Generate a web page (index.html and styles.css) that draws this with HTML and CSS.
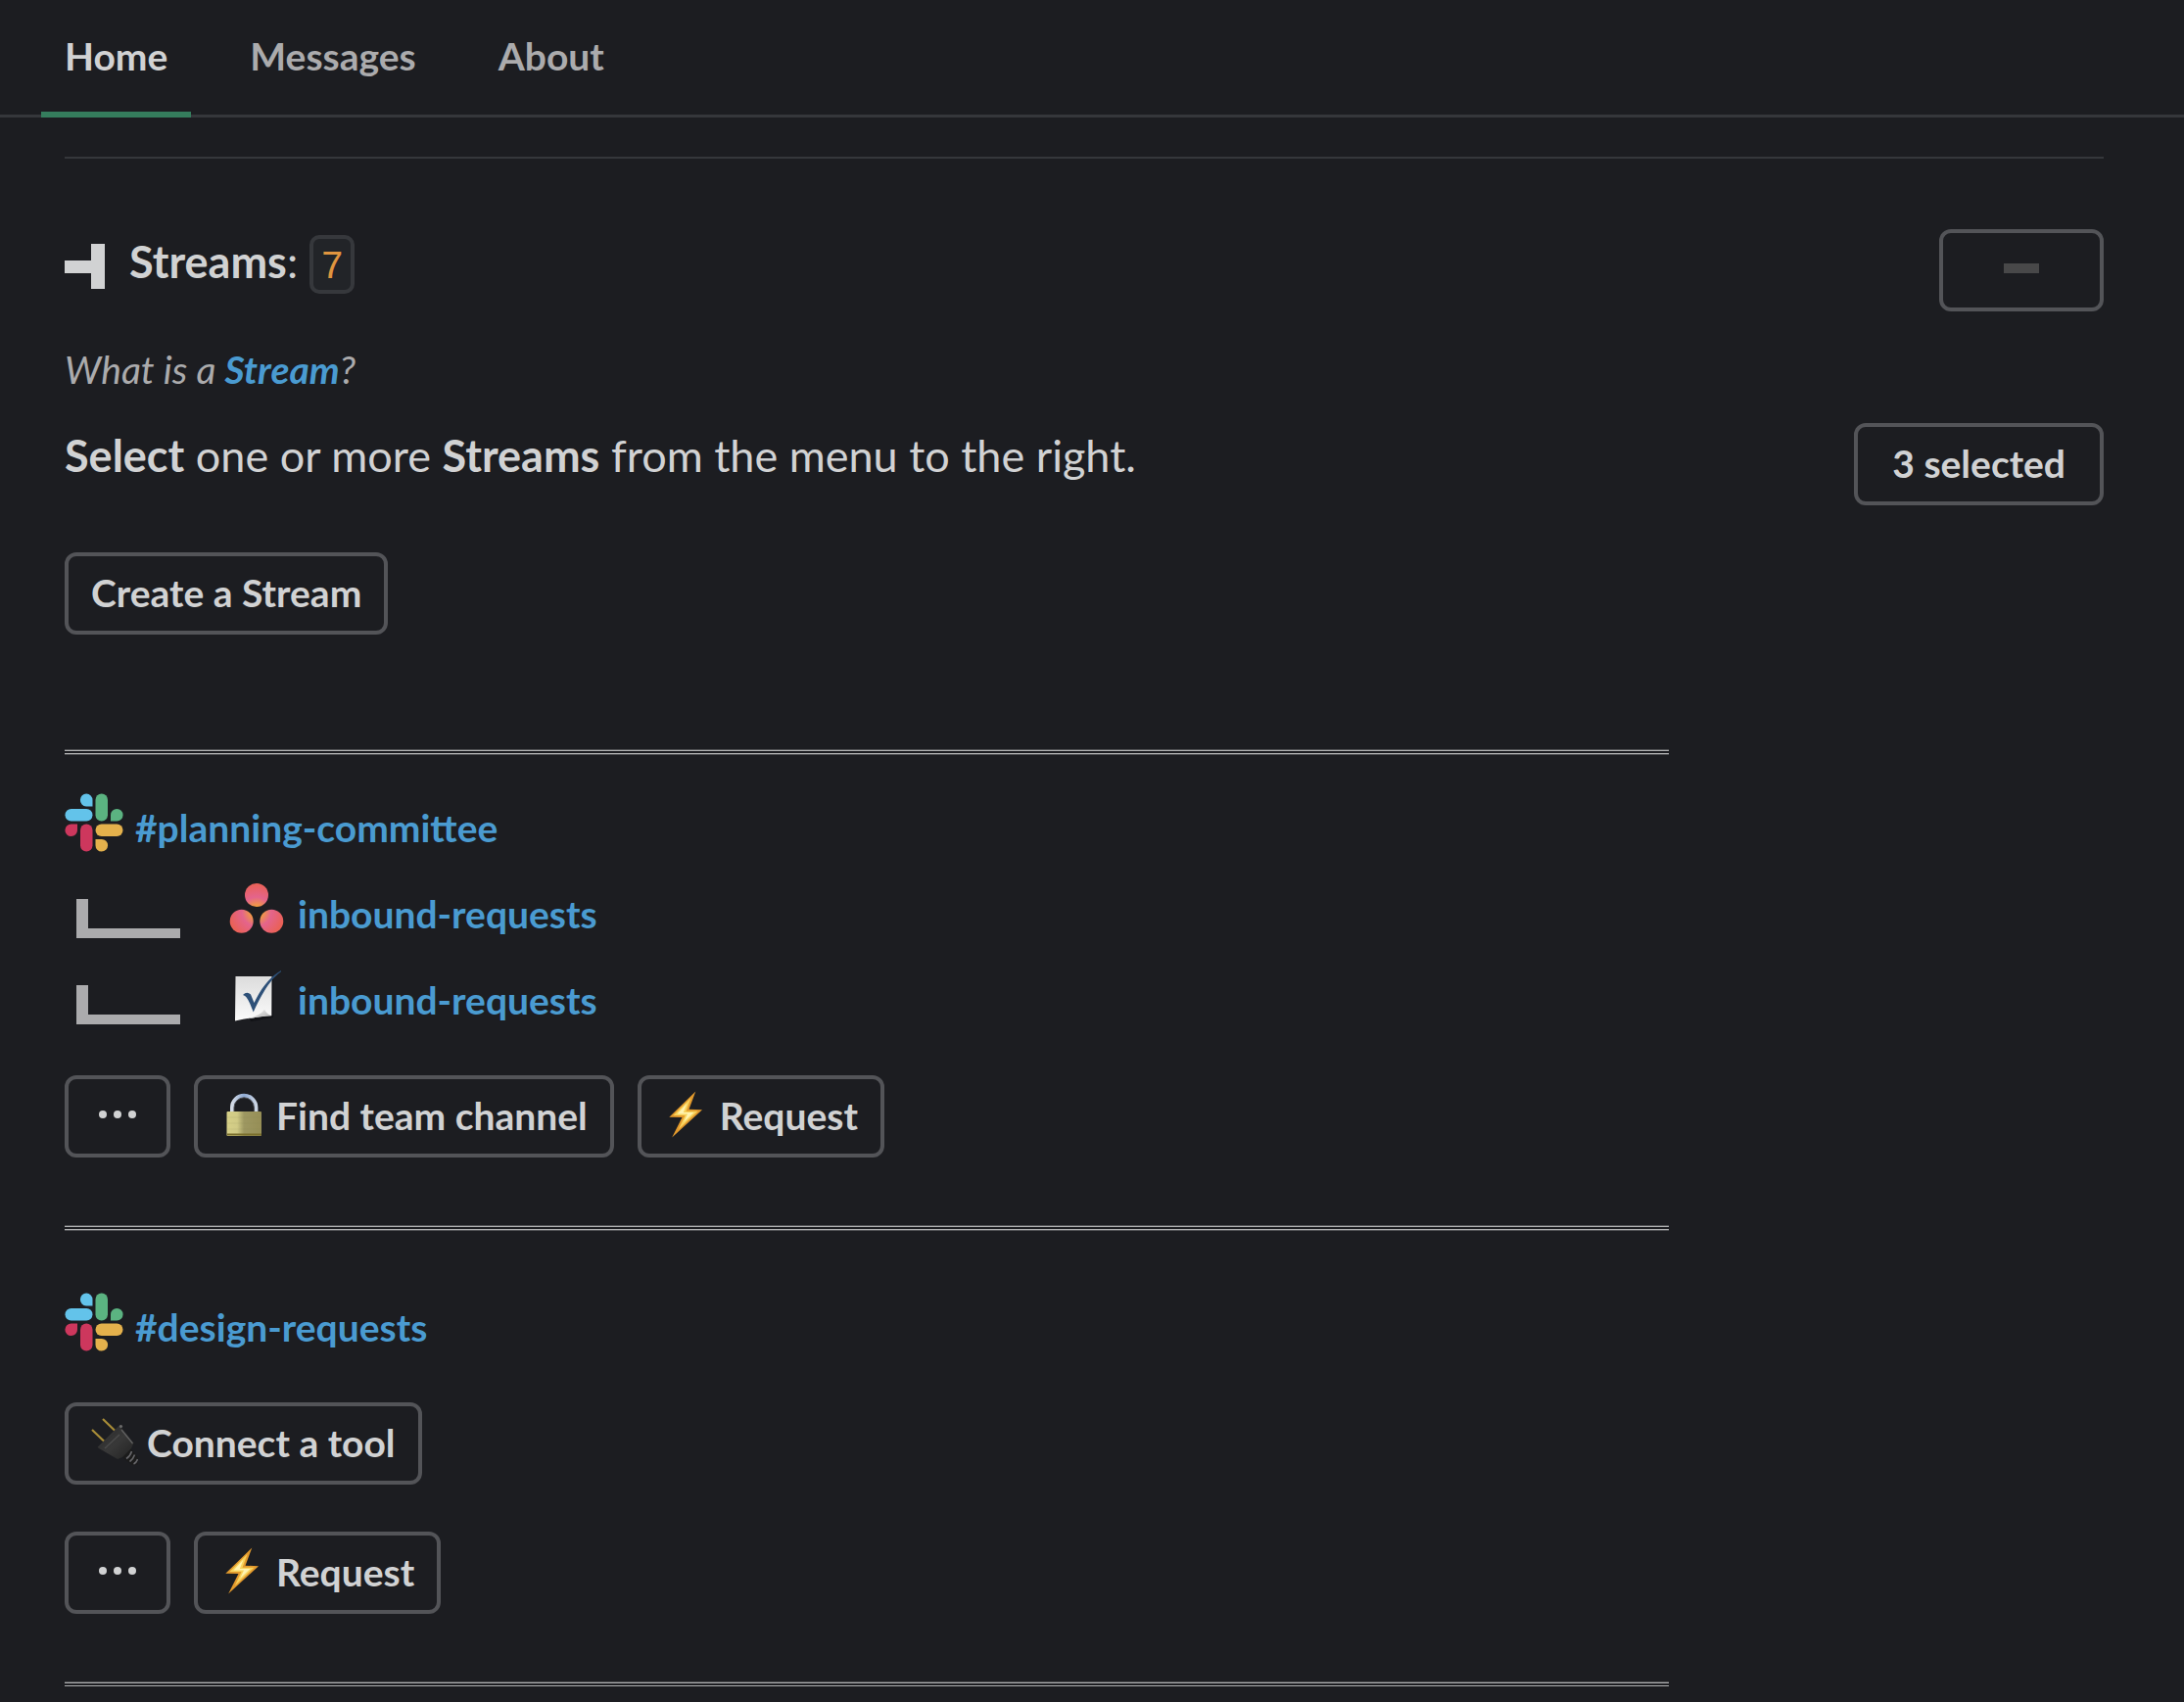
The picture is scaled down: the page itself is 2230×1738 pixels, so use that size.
FILE: index.html
```
<!DOCTYPE html>
<html lang="en">
<head>
    <meta charset="UTF-8">
    <title>Streams</title>
    <link rel="stylesheet" href="styles.css">
</head>
<body>
    <!-- shared icons -->
    <svg class="sprite" aria-hidden="true">
        <defs>
            <radialGradient id="asanaFill" gradientUnits="userSpaceOnUse" cx="30" cy="33" r="30">
                <stop offset="0.16" stop-color="#f2a03a"/>
                <stop offset="0.5" stop-color="#e4648c"/>
                <stop offset="0.95" stop-color="#ea6157"/>
            </radialGradient>
            <linearGradient id="paperFill" x1="0" y1="0" x2="0" y2="1">
                <stop offset="0" stop-color="#dcdcdc"/>
                <stop offset="1" stop-color="#fbfbfb"/>
            </linearGradient>
            <linearGradient id="curlFill" x1="0" y1="0" x2="1" y2="1">
                <stop offset="0.2" stop-color="#eeeeee"/>
                <stop offset="1" stop-color="#a8a8a8"/>
            </linearGradient>
            <linearGradient id="brassFill">
                <stop offset="0" stop-color="#d6d088"/>
                <stop offset="0.3" stop-color="#d0ca85"/>
                <stop offset="0.5" stop-color="#9d9761"/>
                <stop offset="1" stop-color="#968e56"/>
            </linearGradient>
            <linearGradient id="steelFill">
                <stop offset="0" stop-color="#d5dce6"/>
                <stop offset="0.5" stop-color="#8faad4"/>
                <stop offset="1" stop-color="#ccd6e4"/>
            </linearGradient>
            <linearGradient id="plugFill" x1="0" y1="0" x2="1" y2="1">
                <stop offset="0" stop-color="#2b2b2b"/>
                <stop offset="0.5" stop-color="#383838"/>
                <stop offset="1" stop-color="#222222"/>
            </linearGradient>
        </defs>
        <symbol id="slack" viewBox="0 0 60 60">
            <g fill="#63c3ea">
                <path d="M28.5 13.5H22A6.3 6.5 0 1 1 28.5 7Z"/>
                <rect x="0.5" y="16" width="28" height="12.5" rx="6.2"/>
            </g>
            <g fill="#5bb381">
                <rect x="31.5" y="0.5" width="12.5" height="28" rx="6.2"/>
                <path d="M47 28.5V22.2A6.3 6.3 0 1 1 53.2 28.5Z"/>
            </g>
            <g fill="#cd375d">
                <path d="M13 31.5V37.8A6.3 6.3 0 1 1 6.8 31.5Z"/>
                <rect x="16" y="31.5" width="12.5" height="28" rx="6.2"/>
            </g>
            <g fill="#e4b14c">
                <rect x="31.5" y="31.5" width="28" height="12.5" rx="6.2"/>
                <path d="M31.5 47H37.8A6.3 6.3 0 1 1 31.5 53.2Z"/>
            </g>
        </symbol>
        <symbol id="asana" viewBox="0 0 60 60">
            <g fill="url(#asanaFill)">
                <circle cx="30" cy="16" r="12"/>
                <circle cx="14.7" cy="42.7" r="12"/>
                <circle cx="45.3" cy="42.7" r="12"/>
            </g>
        </symbol>
        <symbol id="checklist" viewBox="0 0 60 60">
            <path d="M10 12H47V53L24 57Z" fill="#111216"/>
            <path d="M8.5 11H45.5L45.3 51.3Q30 52 8 56.5Z" fill="url(#paperFill)"/>
            <path d="M20 54.5Q34 51 38 44.7Q40 49 44.7 51Q31 52 20 54.5Z" fill="url(#curlFill)"/>
            <path d="M16 30Q20 26 24 29.5L27.5 38C34 24 44 11 55 5V6.2C45 13 36 27 26.7 47.5C24 41 21 31 16 30Z" fill="#2d5078"/>
        </symbol>
        <symbol id="branch" viewBox="0 0 118 52">
            <path d="M12 12H24V42H118V52H12Z" fill="#ababad"/>
        </symbol>
        <symbol id="dots" viewBox="0 0 54 48">
            <g fill="#d1d2d3">
                <circle cx="12" cy="24" r="4"/>
                <circle cx="27" cy="24" r="4"/>
                <circle cx="42" cy="24" r="4"/>
            </g>
        </symbol>
        <symbol id="lock" viewBox="0 0 48 48">
            <path d="M12 23V17A12.2 12.2 0 0 1 36.4 17V23" fill="none" stroke="url(#steelFill)" stroke-width="4"/>
            <path d="M14 23V17A10.2 10.2 0 0 1 34.4 17V23" fill="none" stroke="#4c4d50" stroke-width="1"/>
            <rect x="6.5" y="21" width="35.5" height="25" rx="1" fill="url(#brassFill)"/>
            <path d="M7 27H41.5M7 33H41.5M7 39H41.5" stroke="#8d8750" stroke-opacity="0.15"/>
            <path d="M7 44.5H42" stroke="#7a6f2c" stroke-width="2"/>
        </symbol>
        <symbol id="bolt" viewBox="0 0 48 48">
            <path d="M32.3 0.5L5.3 26.7L18.5 27L8.2 47.5L39 19.3L25.5 18.7Z" fill="#e39a2d"/>
            <path d="M27.5 7L9.5 25H21.5L15 39L34.5 20.7H22.5Z" fill="#f8d35c"/>
            <path d="M23.5 12.5L13.5 23.5H24L20 32L30.5 22H19.8Z" fill="#fff3b0"/>
        </symbol>
        <symbol id="plug" viewBox="0 0 48 48">
            <path d="M1 12L13.3 23.7M12 1L24.7 13.2" stroke="#a88d38" stroke-width="2.2"/>
            <path d="M31 39L40 31L47.5 40V47.5H41Z" fill="#1b1b1b"/>
            <path d="M36 41.5Q40 39 41.500 34M39.500 44.500Q43 42 44.500 37.500M43.500 47Q46.500 45.500 47.500 42" fill="none" stroke="#66666a" stroke-width="1.6"/>
            <path d="M8 31L30 9L43.5 25.5L41 31L32 40L27 42Z" fill="url(#plugFill)"/>
            <path d="M31 12L42.5 26" fill="none" stroke="#626262" stroke-width="1.2"/>
            <path d="M7.5 30.500L30.5 7.500" stroke="#343434" stroke-width="2.4"/>
            <circle cx="30.5" cy="8.5" r="1.6" fill="#6a6a6a"/>
            <path d="M14 31L29 17" stroke="#4c4c4c" stroke-width="1.4"/>
        </symbol>
    </svg>

    <nav class="tabs">
        <a class="tab active" href="#home">Home</a>
        <a class="tab" href="#messages">Messages</a>
        <a class="tab" href="#about">About</a>
    </nav>

    <main class="content">
        <hr class="rule">

        <div class="row">
            <h2 class="title">
                <svg class="title-icon" viewBox="0 0 42 46" aria-hidden="true">
                    <path d="M0 17H27V0H41V46H27V30H0Z" fill="#d1d2d3"/>
                </svg>
                <span><b>Streams</b>:</span>
                <code class="count">7</code>
            </h2>
            <button class="btn collapse" type="button" aria-label="Collapse">
                <svg class="minus" viewBox="0 0 48 48" aria-hidden="true">
                    <rect x="6" y="19" width="36" height="10" fill="#484849"/>
                </svg>
            </button>
        </div>

        <p class="context">What is a <a href="#stream"><b>Stream</b></a>?</p>

        <div class="row">
            <p class="prompt"><b>Select</b> one or more <b>Streams</b> from the menu to the right.</p>
            <button class="btn picker" type="button" aria-haspopup="listbox">3 selected</button>
        </div>

        <div class="actions">
            <button class="btn" type="button">Create a Stream</button>
        </div>

        <div class="divider first"></div>

        <section class="stream compact">
            <div class="item">
                <svg class="logo" aria-hidden="true"><use href="#slack"/></svg>
                <a href="#planning-committee">#planning-committee</a>
            </div>
            <div class="item">
                <svg class="branch" aria-hidden="true"><use href="#branch"/></svg>
                <svg class="logo" aria-hidden="true"><use href="#asana"/></svg>
                <a href="#inbound-asana">inbound-requests</a>
            </div>
            <div class="item">
                <svg class="branch" aria-hidden="true"><use href="#branch"/></svg>
                <svg class="logo" aria-hidden="true"><use href="#checklist"/></svg>
                <a href="#inbound-list">inbound-requests</a>
            </div>
            <div class="actions">
                <button class="btn" type="button" aria-label="More"><svg class="dots" aria-hidden="true"><use href="#dots"/></svg></button>
                <button class="btn" type="button"><svg class="emoji" aria-hidden="true"><use href="#lock"/></svg>Find team channel</button>
                <button class="btn" type="button"><svg class="emoji" aria-hidden="true"><use href="#bolt"/></svg>Request</button>
            </div>
        </section>

        <div class="divider"></div>

        <section class="stream">
            <div class="item">
                <svg class="logo" aria-hidden="true"><use href="#slack"/></svg>
                <a href="#design-requests">#design-requests</a>
            </div>
            <div class="actions">
                <button class="btn" type="button"><svg class="emoji" aria-hidden="true"><use href="#plug"/></svg>Connect a tool</button>
            </div>
            <div class="actions">
                <button class="btn" type="button" aria-label="More"><svg class="dots" aria-hidden="true"><use href="#dots"/></svg></button>
                <button class="btn" type="button"><svg class="emoji" aria-hidden="true"><use href="#bolt"/></svg>Request</button>
            </div>
        </section>

        <div class="divider"></div>
    </main>
</body>
</html>
```
FILE: styles.css
```
* {
    box-sizing: border-box;
}

body {
    margin: 0;
    background: #1c1d21;
    color: #d1d2d3;
    font-family: Lato, "Liberation Sans", sans-serif;
    font-size: 39px;
    line-height: 60px;
}

a {
    color: #4a9bd1;
    text-decoration: none;
}

a:hover {
    text-decoration: underline;
}

svg {
    display: block;
    flex: none;
}

.sprite {
    position: absolute;
    width: 0;
    height: 0;
}

.tabs {
    display: flex;
    gap: 36px;
    padding: 0 42px;
    border-bottom: 3px solid #35373b;
}

.tab {
    height: 120px;
    margin-bottom: -3px;
    padding: 27px 24px 0;
    border-bottom: 6px solid transparent;
    color: #ababad;
    font-weight: bold;
}

.tab.active {
    border-color: #357d5d;
    color: #d1d2d3;
}

.content {
    padding: 40px 82px 0 66px;
}

.rule {
    height: 2px;
    margin: 0 0 72px;
    border: none;
    background: #35373b;
}

.row {
    display: flex;
    align-items: flex-start;
    justify-content: space-between;
}

.title {
    display: flex;
    align-items: flex-start;
    margin: 0;
    font-size: 45px;
    font-weight: normal;
    line-height: 66px;
}

.title-icon {
    width: 42px;
    height: 46px;
    margin: 15px 24px 0 0;
}

.count {
    height: 60px;
    margin: 6px 0 0 12px;
    padding: 0 7px;
    border: 4px solid #36383c;
    border-radius: 10px;
    background: #222428;
    color: #e0953f;
    font-family: "Liberation Mono", monospace;
    font-size: 40px;
    line-height: 60px;
}

.context {
    margin: 29px 0 25px;
    color: #ababad;
    font-style: italic;
}

.prompt {
    margin: 0;
    font-size: 45px;
    line-height: 66px;
}

.btn {
    display: flex;
    align-items: center;
    height: 84px;
    padding: 0 23px 2px;
    border: 4px solid #535458;
    border-radius: 12px;
    background: transparent;
    color: #d1d2d3;
    font-family: inherit;
    font-size: 39px;
    font-weight: bold;
    cursor: pointer;
}

.btn:hover {
    background: #222428;
}

.collapse {
    padding: 0 56px 2px;
}

.picker {
    padding: 0 35px 2px;
}

.minus,
.emoji {
    width: 48px;
    height: 48px;
    margin-bottom: 2px;
}

.emoji {
    margin-right: 9px;
}

.dots {
    width: 54px;
    height: 48px;
    margin-bottom: 2px;
}

.actions {
    display: flex;
    gap: 24px;
    margin-top: 48px;
}

/* thin double line */
.divider {
    width: 1638px;
    max-width: 100%;
    height: 4px;
    margin-top: 70px;
    border-top: 1px solid #b0b1b2;
    border-bottom: 1px solid #b0b1b2;
    box-shadow: 0 -1px #515255, 0 1px #515255;
}

.divider.first {
    margin-top: 118px;
}

.stream {
    padding-top: 54px;
}

.stream.compact {
    padding-top: 30px;
}

.item {
    display: flex;
    align-items: center;
    height: 88px;
    font-weight: bold;
}

.item a {
    padding-top: 1px;
}

.item + .actions {
    margin-top: 34px;
}

.logo {
    width: 60px;
    height: 60px;
    margin: 0 12px 8px 0;
}

.branch {
    width: 118px;
    height: 52px;
    margin-right: 48px;
}
```
